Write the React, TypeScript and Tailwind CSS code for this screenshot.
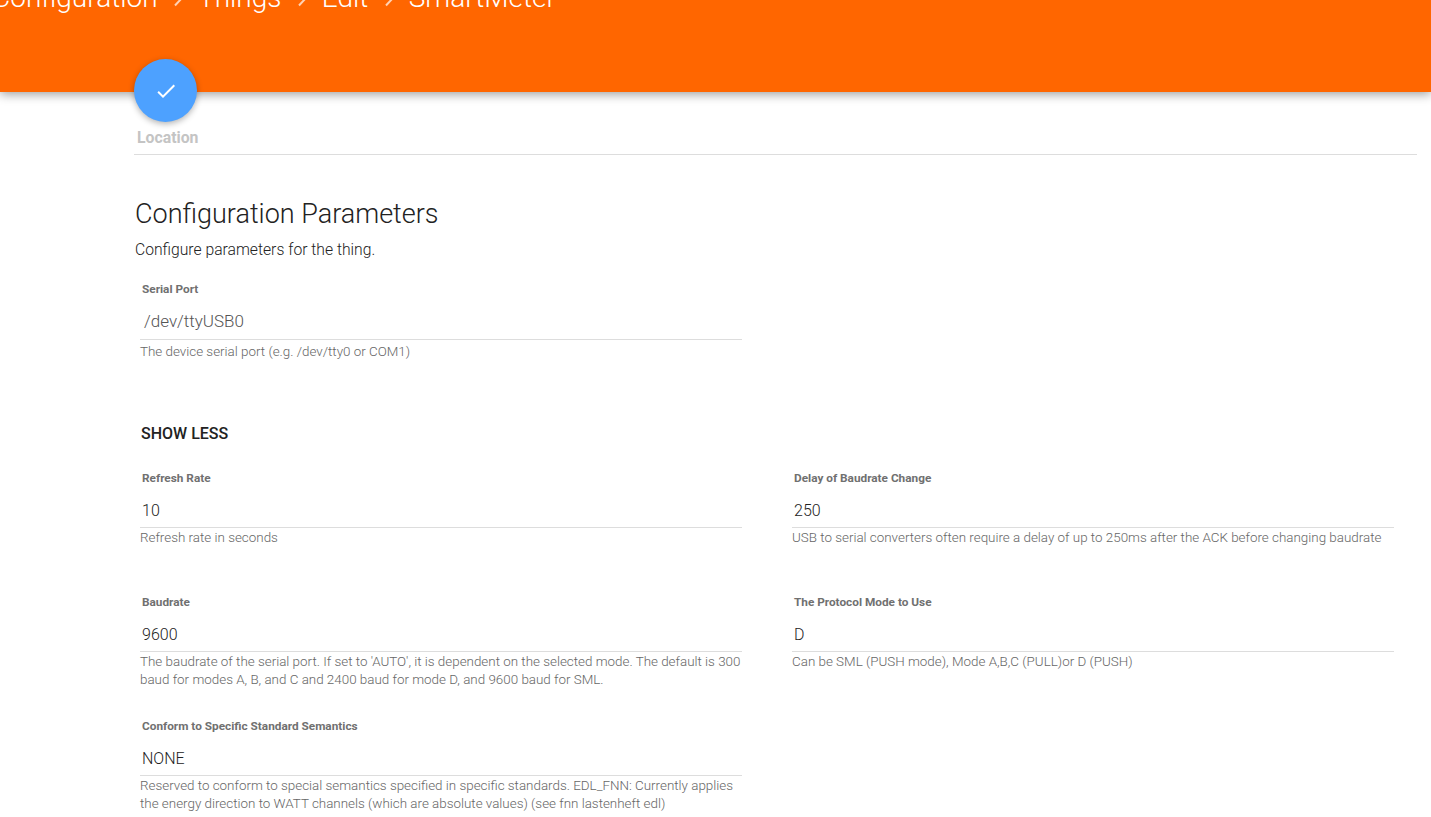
import React from "react";

interface FieldProps {
    label: string;
    value: string;
    help: React.ReactNode;
}

const Chevron = () => (
    <svg width="24" height="24" viewBox="0 0 24 24" className="mx-[8.2px] shrink-0 opacity-70">
        <path d="M9 4.5l7 7.5-7 7.5" fill="none" stroke="#ffffff" strokeWidth="2" />
    </svg>
);

const Field: React.FC<FieldProps> = ({ label, value, help }: FieldProps) => {
    return (
        <div>
            <p className="-mt-[1px] ml-[2px] h-[16px] text-[11.8px] leading-[16px] font-bold text-[#707070]">{label}</p>
            <div className="mt-[9px] h-[33px] border-b border-[#dddddd] pl-[2px] pt-[6px] text-[16px] leading-[20px] font-light text-[#222222]">
                {value}
            </div>
            <p className="mt-[1px] text-[13.4px] leading-[17.6px] font-light text-[#666666]">{help}</p>
        </div>
    );
};

export default function App() {
    return (
        <div className="h-screen overflow-hidden bg-white font-['Roboto',sans-serif]">
            <header className="h-[92px] overflow-hidden bg-[#ff6600] shadow-[0_2px_10px_rgba(0,0,0,0.4)]">
                <div className="-mt-[18px] ml-[-8px] flex h-[32px] items-center whitespace-nowrap text-[28px] leading-[32px] font-light text-white">
                    <span>Configuration</span>
                    <Chevron />
                    <span>Things</span>
                    <Chevron />
                    <span>Edit</span>
                    <Chevron />
                    <span>SmartMeter</span>
                </div>
            </header>

            <main className="relative pl-[134px] pr-[14px]">
                <div className="border-b border-[#dddddd] pb-[7px]">
                    <div className="-mt-[33px] flex h-[63px] w-[63px] items-center justify-center rounded-full bg-[#4da1ff] shadow-[0_2px_6px_rgba(0,0,0,0.3)]">
                        <svg width="24" height="24" viewBox="0 0 24 24">
                            <path d="M9 16.17L4.83 12l-1.42 1.41L9 19 21 7l-1.41-1.41z" fill="#ffffff" />
                        </svg>
                    </div>
                    <p className="ml-[3px] mt-[7px] text-[15.8px] leading-[18px] font-bold text-[#c4c4c4]">Location</p>
                </div>

                <h2 className="mt-[42px] ml-[1px] text-[27px] leading-[34px] font-light text-[#222222]">Configuration Parameters</h2>
                <p className="mt-[9px] ml-[1px] text-[15.7px] leading-[20px] font-light text-[#222222]">Configure parameters for the thing.</p>

                <div className="ml-[6px] mt-[21px] w-[602px]">
                    <p className="ml-[2px] h-[16px] text-[11.8px] leading-[16px] font-bold text-[#707070]">Serial Port</p>
                    <div className="mt-[8px] h-[35px] border-b border-[#dddddd] pl-[4px] pt-[6px] text-[17px] leading-[20px] font-light text-[#555555]">
                        /dev/ttyUSB0
                    </div>
                    <p className="mt-[3px] text-[13.4px] leading-[18px] font-light text-[#666666]">The device serial port (e.g. /dev/tty0 or COM1)</p>
                </div>

                <p className="ml-[7px] mt-[63px] text-[16px] leading-[20px] font-medium text-[#222222]">SHOW LESS</p>

                <div className="ml-[6px] mt-[27px] grid w-[1254px] grid-cols-[602px_602px] auto-rows-[124px] gap-x-[50px]">
                    <Field label="Refresh Rate" value="10" help="Refresh rate in seconds" />
                    <Field
                        label="Delay of Baudrate Change"
                        value="250"
                        help="USB to serial converters often require a delay of up to 250ms after the ACK before changing baudrate"
                    />
                    <Field
                        label="Baudrate"
                        value="9600"
                        help="The baudrate of the serial port. If set to 'AUTO', it is dependent on the selected mode. The default is 300 baud for modes A, B, and C and 2400 baud for mode D, and 9600 baud for SML."
                    />
                    <Field label="The Protocol Mode to Use" value="D" help="Can be SML (PUSH mode), Mode A,B,C (PULL)or D (PUSH)" />
                    <Field
                        label="Conform to Specific Standard Semantics"
                        value="NONE"
                        help="Reserved to conform to special semantics specified in specific standards. EDL_FNN: Currently applies the energy direction to WATT channels (which are absolute values) (see fnn lastenheft edl)"
                    />
                </div>
            </main>
        </div>
    );
}
